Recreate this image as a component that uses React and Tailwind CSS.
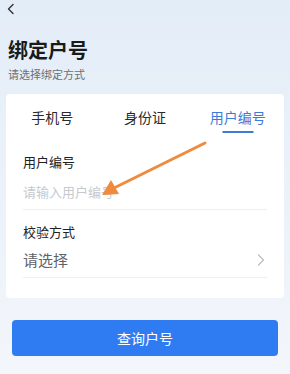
import React, { useState } from 'react';

const tabs = ['手机号', '身份证', '用户编号'];

export default function App() {
  const [active, setActive] = useState(2);

  return (
    <div
      className="relative w-[290px] h-[374px] overflow-hidden bg-gradient-to-b from-[#e3edf8] to-[#f3f6fb]"
      style={{ fontFamily: '"Noto Sans CJK SC", "Noto Sans", sans-serif' }}
    >
      {/* back */}
      <div className="h-[20px] pl-[6px] pt-[3px]">
        <svg width="10" height="12" viewBox="0 0 10 12" fill="none">
          <path d="M7 1.5 L2.5 6 L7 10.5" stroke="#333" strokeWidth="1.4" strokeLinecap="round" strokeLinejoin="round" />
        </svg>
      </div>

      <div className="px-[8px] pt-[16px]">
        <h1 className="text-[20px] leading-[28px] font-bold text-[#1a1a1a]">绑定户号</h1>
        <p className="mt-[3px] text-[11px] leading-[15px] text-[#6b6f75]">请选择绑定方式</p>
      </div>

      {/* card */}
      <div className="mx-[6px] mt-[12px] h-[204px] rounded-[4px] bg-white">
        <div className="grid grid-cols-3 h-[44px]">
          {tabs.map((t, i) => (
            <button
              key={t}
              onClick={() => setActive(i)}
              className={`relative flex items-center justify-center pt-[3px] text-[14px] ${
                i === active ? 'text-[#3d7bd6]' : 'text-[#2a2a2a]'
              }`}
            >
              {t}
              {i === active && (
                <span className="absolute left-1/2 -translate-x-1/2 top-[37px] w-[31px] h-[2px] bg-[#3d7bd6]" />
              )}
            </button>
          ))}
        </div>

        <div className="px-[17px]">
          <div className="pt-[15px] text-[13px] leading-[18px] text-[#222]">用户编号</div>
          <input
            className="mt-[11px] w-full text-[13px] leading-[20px] text-[#333] placeholder-[#c6c9ce] outline-none"
            placeholder="请输入用户编号"
          />
          <div className="mt-[7px] h-px bg-[#eeeff1]" />

          <div className="pt-[13px] text-[13px] leading-[18px] text-[#222]">校验方式</div>
          <div className="mt-[8px] flex items-center justify-between h-[22px]">
            <span className="text-[15px] text-[#5f6266]">请选择</span>
            <svg width="8" height="12" viewBox="0 0 8 12" fill="none" className="mr-[2px]">
              <path d="M1.5 1 L6.5 6 L1.5 11" stroke="#b9bcc1" strokeWidth="1.2" strokeLinecap="round" strokeLinejoin="round" />
            </svg>
          </div>
          <div className="mt-[6px] h-px bg-[#eeeff1]" />
        </div>
      </div>

      <div className="px-[12px] pt-[22px]">
        <button className="w-full h-[36px] rounded-[4px] bg-[#2f7cf2] text-white text-[14px]">查询户号</button>
      </div>

      {/* annotation arrow */}
      <svg className="absolute left-0 top-0 pointer-events-none" width="290" height="374" viewBox="0 0 290 374">
        <line x1="205" y1="143" x2="114" y2="188" stroke="#f08a3c" strokeWidth="3" strokeLinecap="round" />
        <polygon points="102,195 111,180 119,194" fill="#f08a3c" />
      </svg>
    </div>
  );
}
